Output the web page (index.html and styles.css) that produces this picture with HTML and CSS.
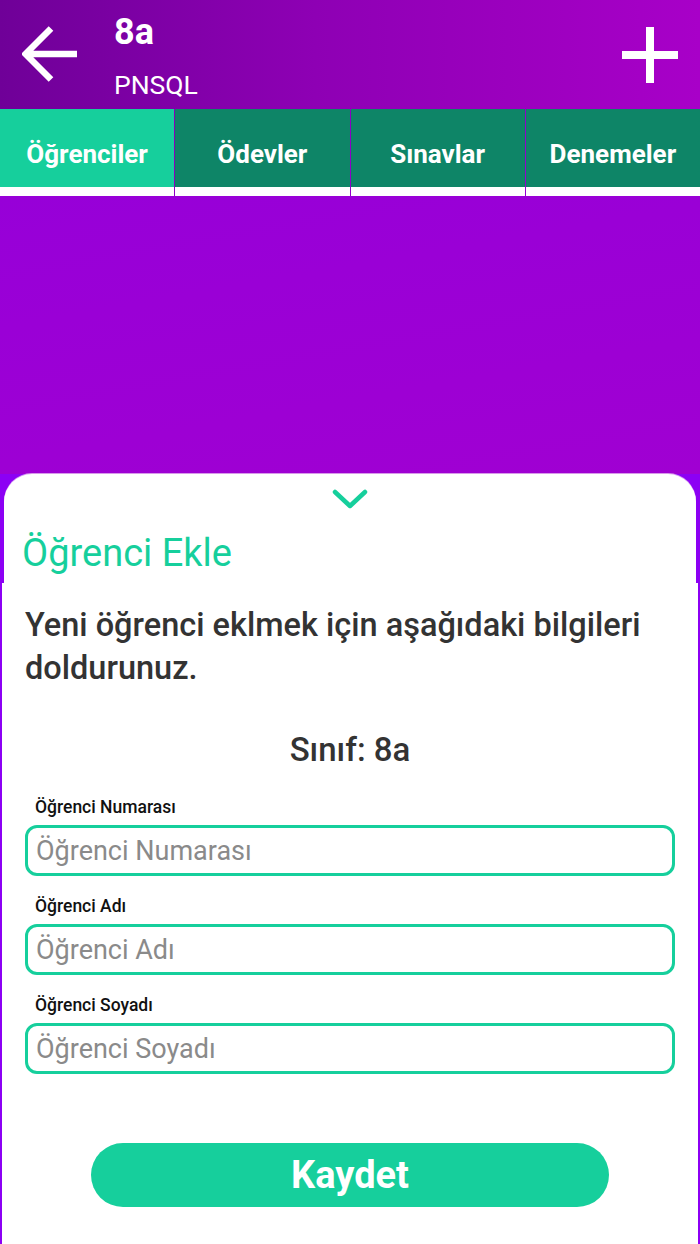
FILE: index.html
```html
<!DOCTYPE html>
<html lang="tr">
<head>
<meta charset="utf-8">
<title>8a - PNSQL</title>
<link rel="stylesheet" href="styles.css">
</head>
<body>
<div class="screen">
  <header class="appbar">
    <button class="icon-btn back" aria-label="Geri">
      <svg width="56" height="56" viewBox="0 0 56 56"><path d="M55 28H4 M29 2.5 L3.5 28 L29 53.5" fill="none" stroke="#fff" stroke-width="6.5" stroke-linecap="butt" stroke-linejoin="miter"/></svg>
    </button>
    <div class="titles">
      <div class="title">8a</div>
      <div class="subtitle">PNSQL</div>
    </div>
    <button class="icon-btn add" aria-label="Ekle">
      <svg width="56" height="56" viewBox="0 0 56 56"><path d="M28 0V56 M0 28H56" fill="none" stroke="#fff" stroke-width="8"/></svg>
    </button>
  </header>
  <nav class="tabs">
    <div class="tab active"><span class="tab-label">Öğrenciler</span></div>
    <div class="tab"><span class="tab-label">Ödevler</span></div>
    <div class="tab"><span class="tab-label">Sınavlar</span></div>
    <div class="tab"><span class="tab-label">Denemeler</span></div>
  </nav>
  <main class="content"></main>
  <section class="sheet">
    <div class="sheet-head">
      <div class="chevron">
        <svg width="36" height="22" viewBox="0 0 36 22"><path d="M3 4 L18 18 L33 4" fill="none" stroke="#16cf9c" stroke-width="4.5" stroke-linecap="round" stroke-linejoin="round"/></svg>
      </div>
      <h2 class="sheet-title">Öğrenci Ekle</h2>
    </div>
    <div class="sheet-body">
      <p class="intro">Yeni öğrenci eklmek için aşağıdaki bilgileri doldurunuz.</p>
      <div class="class-line">Sınıf: 8a</div>
      <div class="field">
        <label class="field-label">Öğrenci Numarası</label>
        <div class="input"><span class="placeholder">Öğrenci Numarası</span></div>
      </div>
      <div class="field">
        <label class="field-label">Öğrenci Adı</label>
        <div class="input"><span class="placeholder">Öğrenci Adı</span></div>
      </div>
      <div class="field">
        <label class="field-label">Öğrenci Soyadı</label>
        <div class="input"><span class="placeholder">Öğrenci Soyadı</span></div>
      </div>
      <div class="actions">
        <button class="save">Kaydet</button>
      </div>
    </div>
  </section>
</div>
</body>
</html>
```

FILE: styles.css
```css
* { box-sizing: border-box; }
html, body { margin: 0; padding: 0; }
body {
  width: 700px;
  height: 1244px;
  overflow: hidden;
  font-family: Roboto, "Noto Sans", "Liberation Sans", sans-serif;
}
.screen {
  width: 700px;
  height: 1244px;
  display: flex;
  flex-direction: column;
  background: linear-gradient(160deg, #7a00a8 0%, #9a00d6 30%, #9e00d4 60%, #8a00f0 100%);
}
.appbar {
  height: 109px;
  display: flex;
  align-items: flex-start;
  background: linear-gradient(90deg, #6f0098 0%, #8e00b4 45%, #a800c8 100%);
  color: #fff;
}
.icon-btn {
  background: none;
  border: 0;
  padding: 0;
  width: 56px;
  height: 56px;
  display: flex;
}
.back { margin: 26px 0 0 22px; }
.add { margin: 27px 22px 0 auto; }
.titles {
  margin-left: 36px;
  padding-top: 10px;
}
.title {
  font-size: 36px;
  font-weight: 700;
  line-height: 44px;
}
.subtitle {
  font-size: 26.5px;
  line-height: 32px;
  margin-top: 15px;
}
.tabs {
  display: flex;
  height: 87px;
  gap: 1px;
}
.tab {
  flex: 1;
  display: flex;
  flex-direction: column;
  background: #0e8567;
  border-bottom: 9px solid #fff;
  align-items: center;
  justify-content: center;
}
.tab.active { background: #16cf9c; }
.tab-label {
  color: #fff;
  font-weight: 700;
  font-size: 26px;
  margin-top: 12px;
}
.content {
  flex: 1;
  background: linear-gradient(170deg, #9700d8 0%, #a000d2 100%);
}
.sheet {
  display: flex;
  flex-direction: column;
  background: #8c00f4;
}
.sheet-head {
  margin: 0 4px;
  background: #fff;
  border-radius: 28px 28px 0 0;
  height: 109px;
  padding-top: 14px;
  box-shadow: 0 -1px 0 rgba(230,190,240,0.8);
}
.chevron {
  display: flex;
  justify-content: center;
  height: 24px;
}
.sheet-title {
  margin: 21px 0 0 18px;
  font-size: 38px;
  font-weight: 400;
  color: #16cf9c;
  line-height: 40px;
}
.sheet-body {
  margin: 0 2px;
  background: #fff;
  height: 661px;
  padding: 21px 23px 0;
}
.intro {
  margin: 0;
  font-size: 32.5px;
  font-weight: 500;
  line-height: 43px;
  color: #333;
}
.class-line {
  text-align: center;
  font-size: 33px;
  font-weight: 500;
  color: #333;
  margin-top: 40px;
  line-height: 40px;
}
.field { margin-top: 25px; }
.field + .field { margin-top: 18px; }
.field-label {
  display: block;
  font-size: 17.5px;
  font-weight: 500;
  color: #111;
  padding-left: 10px;
  line-height: 24px;
}
.input {
  margin-top: 6px;
  height: 51px;
  border: 3px solid #16cf9c;
  border-radius: 12px;
  display: flex;
  align-items: center;
  padding-left: 8px;
}
.placeholder {
  font-size: 27px;
  color: #8a8a8a;
}
.actions {
  display: flex;
  justify-content: center;
  margin-top: 69px;
}
.save {
  width: 518px;
  height: 64px;
  border: 0;
  border-radius: 32px;
  background: #16cf9c;
  color: #fff;
  font-family: Roboto, "Noto Sans", sans-serif;
  font-weight: 700;
  font-size: 38px;
  padding: 0;
}
```
